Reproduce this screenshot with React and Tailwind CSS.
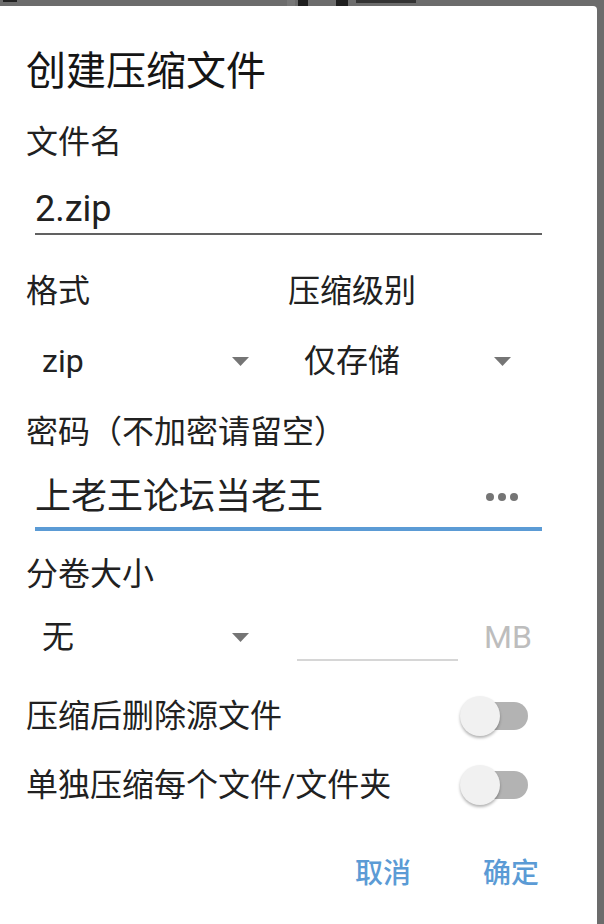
import { useState } from 'react'

const FONT = "font-['Roboto','Noto_Sans_CJK_SC',sans-serif]"

function Caret() {
  return (
    <svg width="17" height="9" viewBox="0 0 17 9" className="shrink-0">
      <path d="M0 0 L17 0 L8.5 9 Z" fill="#757575" />
    </svg>
  )
}

function Spinner({ value }) {
  return (
    <div className="flex h-[50px] items-center justify-between pl-[16px] pr-[39px]">
      <span className="text-[32px] leading-[40px] text-[#212121]">{value}</span>
      <Caret />
    </div>
  )
}

function Toggle({ on, onChange }) {
  return (
    <button
      type="button"
      onClick={() => onChange(!on)}
      className="relative flex h-[40px] w-[68px] items-center justify-end"
    >
      <span className={`h-[28px] w-[64px] rounded-full ${on ? 'bg-[#a9cbe9]' : 'bg-[#b3b3b3]'}`} />
      <span
        className={`absolute top-0 h-[40px] w-[40px] rounded-full shadow-[0_2px_3px_rgba(0,0,0,0.3)] ${
          on ? 'right-0 bg-[#5b9bd5]' : 'left-0 bg-[#f1f1f1]'
        }`}
      />
    </button>
  )
}

export default function App() {
  const [deleteSrc, setDeleteSrc] = useState(false)
  const [separate, setSeparate] = useState(false)

  return (
    <div className={`min-h-[924px] h-[924px] overflow-hidden bg-[#6c6c6c] ${FONT}`}>
      {/* 背景里露出的一点内容 */}
      <div className="flex h-[6px] items-start">
        <div className="ml-[3px] h-[2px] w-[14px] bg-[#222]" />
        <div className="ml-[270px] h-[6px] w-[8px] bg-[#777]" />
        <div className="ml-[3px] h-[6px] w-[10px] bg-[#1e1e1e]" />
        <div className="ml-[28px] h-[6px] w-[12px] bg-[#1e1e1e]" />
        <div className="ml-[8px] h-[3px] w-[60px] bg-[#333]" />
      </div>

      <div className="mr-[7px] h-[918px] rounded-tr-[4px] bg-white pl-[26px] pr-[47px] pt-[42px]">
        <h1 className="h-[48px] text-[40px] leading-[48px] text-[#151515]">创建压缩文件</h1>

        <p className="mt-[26px] flex h-[40px] items-center text-[32px] text-[#212121]">文件名</p>
        <div className="ml-[9px] mr-[8px] mt-[23px] flex h-[50px] items-center border-b-2 border-[#616161]">
          <span className="text-[36px] leading-[44px] text-[#212121]">2.zip</span>
        </div>

        <div className="mt-[36px] grid grid-cols-2">
          <p className="flex h-[40px] items-center text-[32px] text-[#212121]">格式</p>
          <p className="flex h-[40px] items-center text-[32px] text-[#212121]">压缩级别</p>
        </div>
        <div className="mt-[25px] grid grid-cols-2">
          <Spinner value="zip" />
          <Spinner value="仅存储" />
        </div>

        <p className="mt-[26px] flex h-[40px] items-center text-[32px] text-[#212121]">密码（不加密请留空）</p>
        <div className="ml-[9px] mr-[8px] mt-[15px] flex h-[64px] items-center justify-between border-b-4 border-[#5b9bd5] pr-[24px]">
          <span className="text-[36px] leading-[44px] text-[#212121]">上老王论坛当老王</span>
          <div className="flex items-center gap-[4px]">
            <span className="h-[8px] w-[8px] rounded-full bg-[#757575]" />
            <span className="h-[8px] w-[8px] rounded-full bg-[#757575]" />
            <span className="h-[8px] w-[8px] rounded-full bg-[#757575]" />
          </div>
        </div>

        <p className="mt-[23px] flex h-[40px] items-center text-[32px] text-[#212121]">分卷大小</p>
        <div className="mt-[18px] grid grid-cols-2">
          <Spinner value="无" />
          <div className="flex h-[50px] items-center">
            <div className="ml-[9px] mt-[-2px] h-[50px] w-[161px] border-b-2 border-[#d6d6d6]" />
            <span className="ml-[26px] text-[32px] text-[#bdbdbd]">MB</span>
          </div>
        </div>

        <div className="mt-[29px] flex h-[50px] items-center justify-between pr-[22px]">
          <span className="text-[32px] text-[#212121]">压缩后删除源文件</span>
          <Toggle on={deleteSrc} onChange={setDeleteSrc} />
        </div>
        <div className="mt-[19px] flex h-[50px] items-center justify-between pr-[22px]">
          <span className="text-[32px] text-[#212121]">单独压缩每个文件/文件夹</span>
          <Toggle on={separate} onChange={setSeparate} />
        </div>

        <div className="mt-[39px] flex h-[50px] items-center justify-end gap-[72px] pr-[11px]">
          <button type="button" className="text-[28px] font-medium text-[#5b9bd5]">取消</button>
          <button type="button" className="text-[28px] font-medium text-[#5b9bd5]">确定</button>
        </div>
      </div>
    </div>
  )
}
